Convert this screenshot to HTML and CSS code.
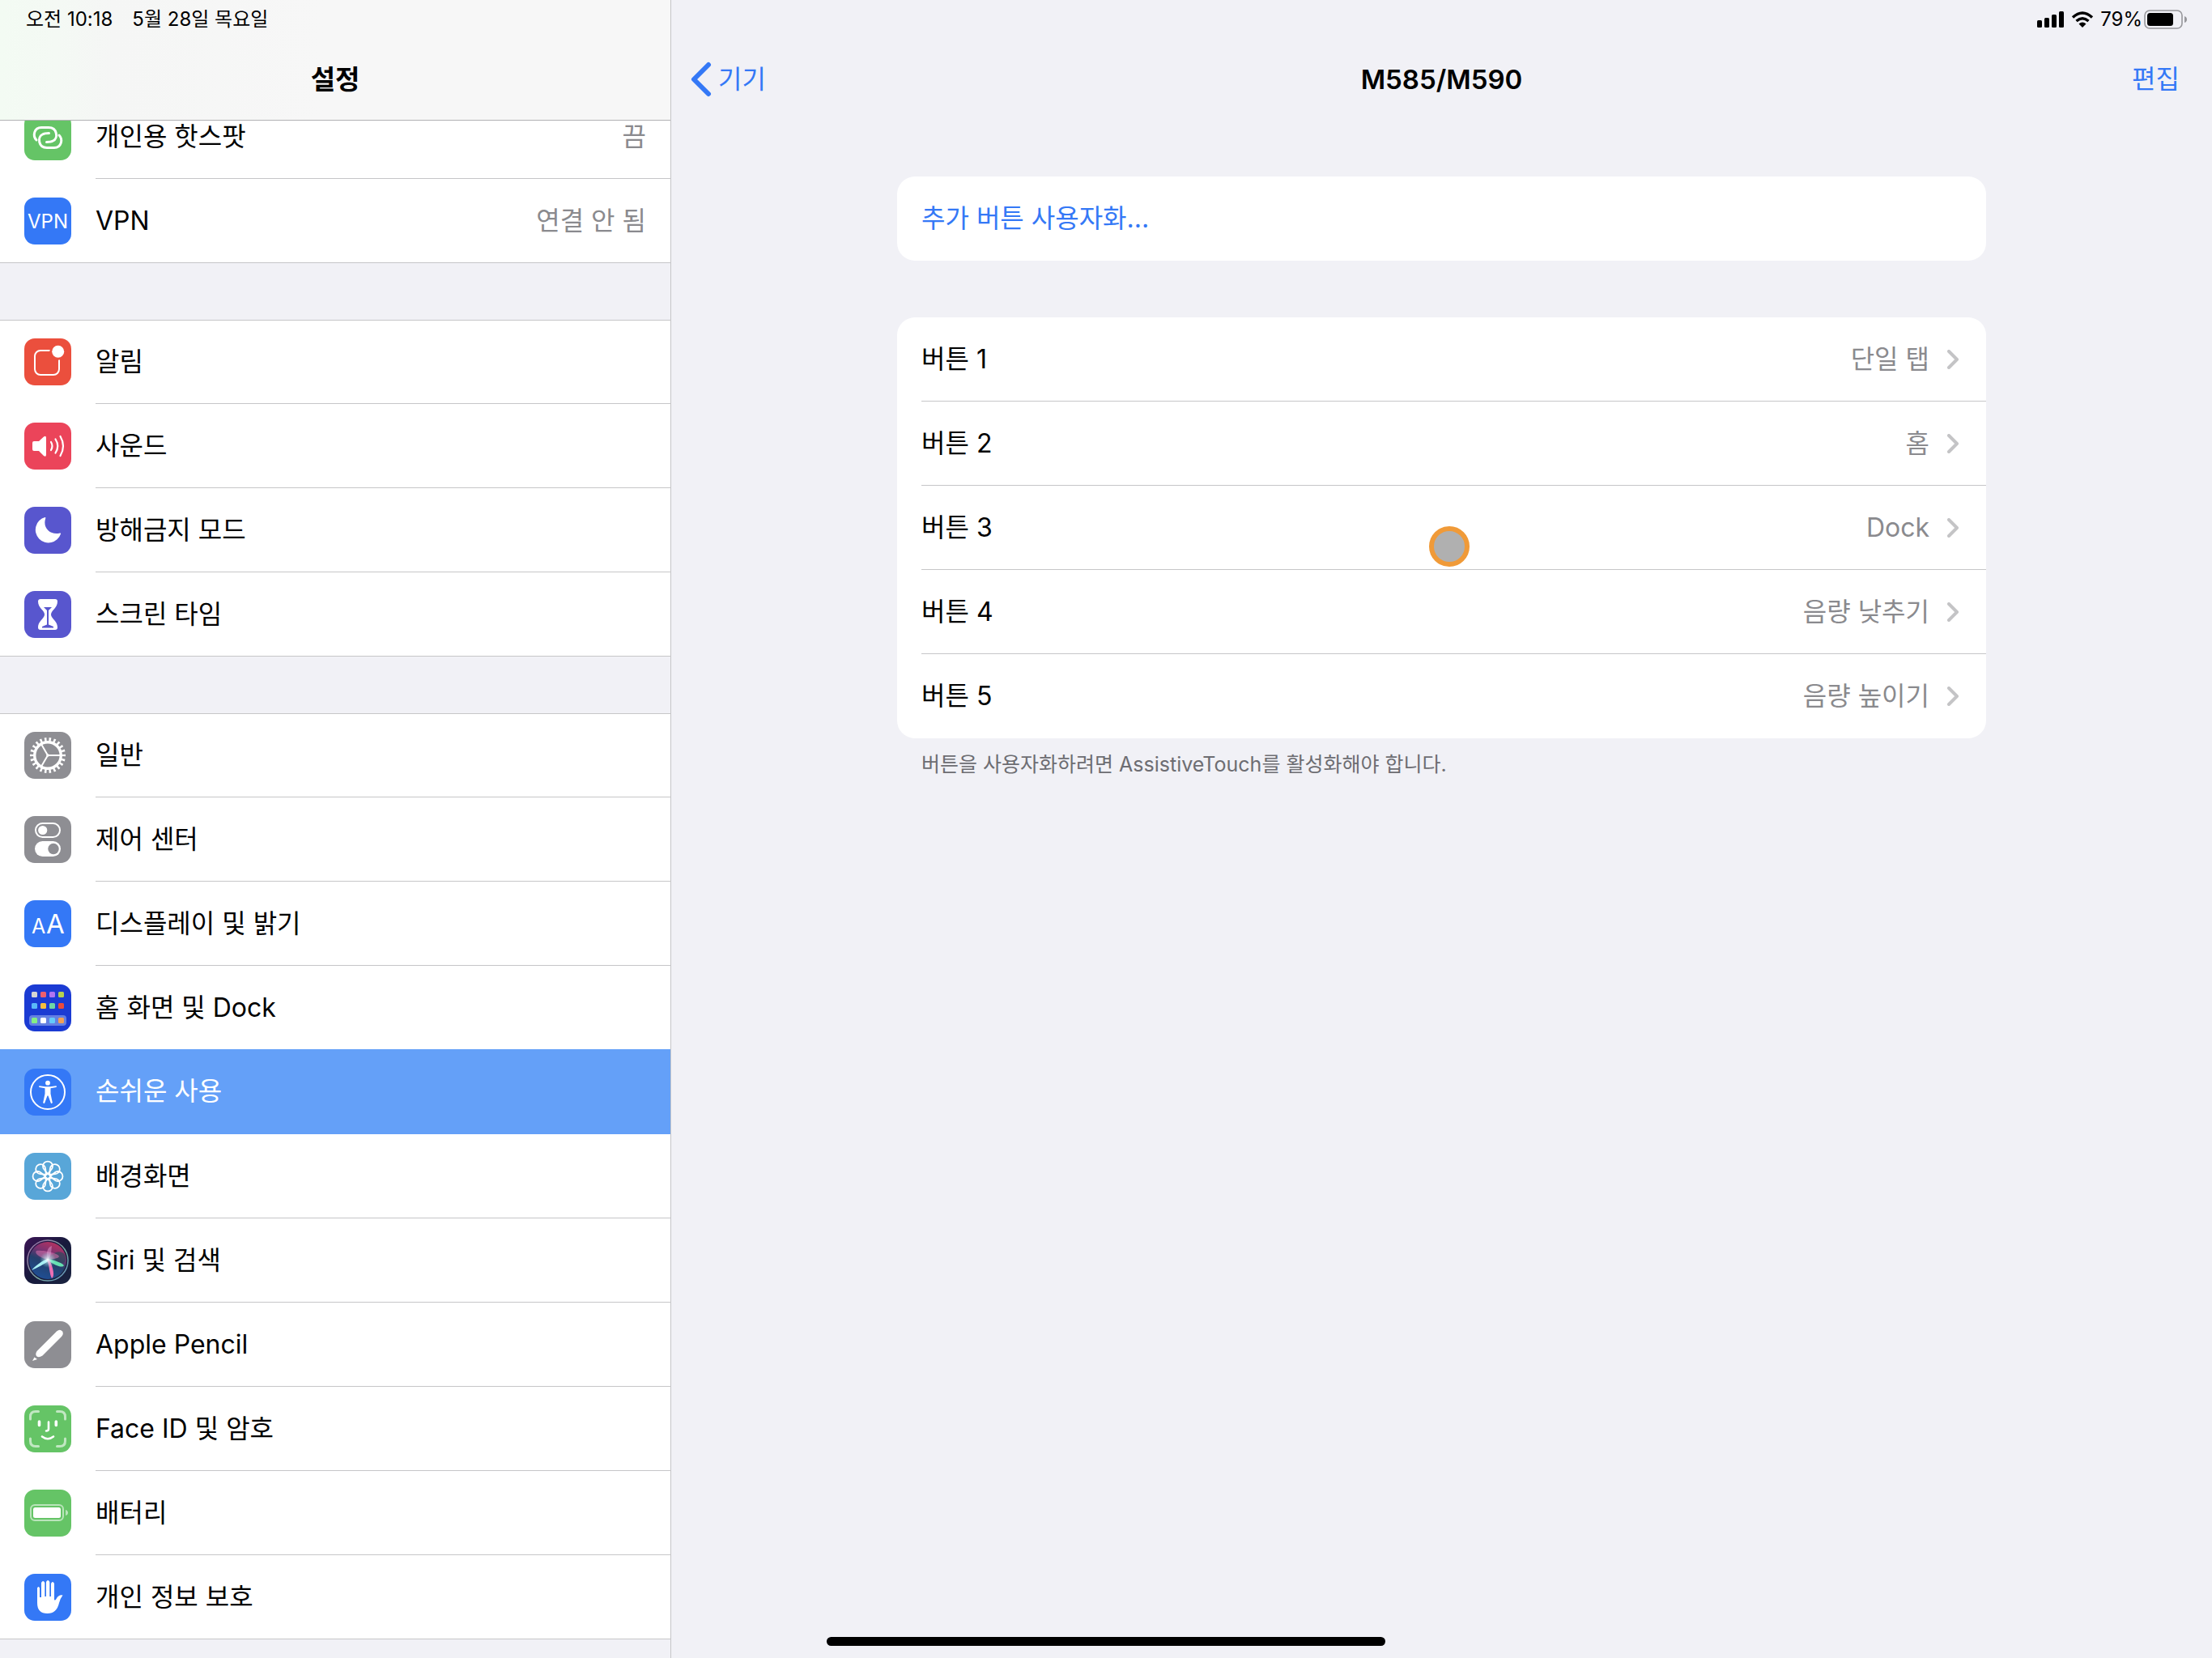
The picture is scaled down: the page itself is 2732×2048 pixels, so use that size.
FILE: index.html
```
<!DOCTYPE html>
<html lang="ko">
<head>
    <meta charset="UTF-8">
    <meta name="viewport" content="width=device-width, initial-scale=1.0">
    <link rel="stylesheet" href="styles.css">
    <title>설정</title>
</head>
<body>
    <aside class="sidebar">
        <header class="sidebar-header">
            <div class="status">
                <span>오전 10:18</span>
                <span>5월 28일 목요일</span>
            </div>
            <div class="navbar">
                <h1 class="title">설정</h1>
            </div>
        </header>

        <nav class="menu">
            <div class="group">
                <a class="item" href="#hotspot">
                    <svg class="icon green" viewBox="0 0 58 58" fill="none" stroke="#fff" stroke-width="3" stroke-linecap="round">
                        <path d="M15 33C10 28 12 17.500 21 17.500H30C41 17.500 42 31 35.500 34C33 35.500 31 35.500 27.500 35.500"/>
                        <path d="M43 27C48 32 46 42.500 37 42.500H28C17 42.500 16 29 22.500 26C25 24.500 27 24.500 30.500 24.500"/>
                    </svg>
                    <span class="row"><span>개인용 핫스팟</span><span class="value">끔</span></span>
                </a>
                <a class="item" href="#vpn">
                    <svg class="icon blue" viewBox="0 0 58 58">
                        <text class="icon-text" x="29" y="38" font-size="24" text-anchor="middle">VPN</text>
                    </svg>
                    <span class="row"><span>VPN</span><span class="value">연결 안 됨</span></span>
                </a>
            </div>

            <div class="group">
                <a class="item" href="#notifications">
                    <svg class="icon orange" viewBox="0 0 58 58">
                        <rect x="13" y="15" width="30" height="30" rx="7" fill="none" stroke="#fff" stroke-width="2"/>
                        <circle cx="41.700" cy="16.300" r="10.500" fill="#eb4f3d"/>
                        <circle cx="41.700" cy="16.300" r="7.500" fill="#fff"/>
                    </svg>
                    <span class="row">알림</span>
                </a>
                <a class="item" href="#sounds">
                    <svg class="icon pink" viewBox="0 0 58 58">
                        <path d="M12 23H18L24 17.500Q27 15.500 27 19V39.500Q27 43 24 41L18 35H12Q10 35 10 33V25Q10 23 12 23Z" fill="#fff"/>
                        <path d="M33 24Q36 29 33 34M38.500 20.500Q44 29 38.500 37.500M44.500 17Q51.500 29 44.500 41" fill="none" stroke="#fff" stroke-width="2.200" stroke-linecap="round"/>
                    </svg>
                    <span class="row">사운드</span>
                </a>
                <a class="item" href="#dnd">
                    <svg class="icon purple" viewBox="0 0 58 58">
                        <path d="M25.500 13A16 16 0 1 0 45 33.500Q45.500 32 44 32.500C33 35.500 22 27 26.300 14Q26.500 12.500 25.500 13Z" fill="#fff"/>
                    </svg>
                    <span class="row">방해금지 모드</span>
                </a>
                <a class="item" href="#screen-time">
                    <svg class="icon purple" viewBox="0 0 58 58">
                        <path d="M20 10H38Q41 10 41 13C41 21 33 24 33 29C33 34 41 37 41 45Q41 48 38 48H20Q17 48 17 45C17 37 25 34 25 29C25 24 17 21 17 13Q17 10 20 10Z" fill="#fff"/>
                        <path d="M24 20H34L30 24V41.500L36 44V45.500H22V44L28 41.500V24Z" fill="#5856ce"/>
                    </svg>
                    <span class="row">스크린 타임</span>
                </a>
            </div>

            <div class="group">
                <a class="item" href="#general">
                    <svg class="icon gray" viewBox="0 0 58 58" fill="none" stroke="#fff">
                        <circle cx="29" cy="29" r="19.500" stroke-width="5" pathLength="88" stroke-dasharray="1.800 2.200" stroke-dashoffset="0.900"/>
                        <circle cx="29" cy="29" r="16.300" stroke-width="3.400"/>
                        <path d="M29 29H45M29 29L21 15.200M29 29L21 42.800" stroke-width="2"/>
                        <circle cx="29" cy="29" r="1" stroke-width="1.500"/>
                    </svg>
                    <span class="row">일반</span>
                </a>
                <a class="item" href="#control-center">
                    <svg class="icon gray" viewBox="0 0 58 58">
                        <rect x="14" y="9" width="30" height="17" rx="8.500" fill="none" stroke="#fff" stroke-width="2"/>
                        <circle cx="22.700" cy="17.500" r="5.600" fill="#fff"/>
                        <rect x="13" y="31" width="32" height="19" rx="9.500" fill="#fff"/>
                        <circle cx="36" cy="40.500" r="6.700" fill="#8e8e93"/>
                    </svg>
                    <span class="row">제어 센터</span>
                </a>
                <a class="item" href="#display">
                    <svg class="icon blue" viewBox="0 0 58 58">
                        <text class="icon-text" x="9" y="41" font-size="25">A</text>
                        <text class="icon-text" x="27" y="41" font-size="33">A</text>
                    </svg>
                    <span class="row">디스플레이 및 밝기</span>
                </a>
                <a class="item" href="#home-screen">
                    <svg class="icon navy" viewBox="0 0 58 58">
                        <rect x="6" y="38" width="46" height="13" rx="4" fill="#6480e2"/>
                        <rect x="9" y="9" width="7" height="7" rx="1.500" fill="#d5d5d3"/>
                        <rect x="20" y="9" width="7" height="7" rx="1.500" fill="#ed5f6d"/>
                        <rect x="31" y="9" width="7" height="7" rx="1.500" fill="#b074f2"/>
                        <rect x="42" y="9" width="7" height="7" rx="1.500" fill="#b5d24f"/>
                        <rect x="9" y="23" width="7" height="7" rx="1.500" fill="#5ab9f8"/>
                        <rect x="20" y="23" width="7" height="7" rx="1.500" fill="#f6be3f"/>
                        <rect x="31" y="23" width="7" height="7" rx="1.500" fill="#6fd6a5"/>
                        <rect x="42" y="23" width="7" height="7" rx="1.500" fill="#eb4b3b"/>
                        <rect x="9" y="41" width="7" height="7" rx="1.500" fill="#85ee83"/>
                        <rect x="20" y="41" width="7" height="7" rx="1.500" fill="#fff"/>
                        <rect x="31" y="41" width="7" height="7" rx="1.500" fill="#63cbfa"/>
                        <rect x="42" y="41" width="7" height="7" rx="1.500" fill="#f2a054"/>
                    </svg>
                    <span class="row">홈 화면 및 Dock</span>
                </a>
                <a class="item selected" href="#accessibility" aria-current="page">
                    <svg class="icon blue" viewBox="0 0 58 58">
                        <circle cx="29" cy="29" r="21" fill="none" stroke="#fff" stroke-width="2"/>
                        <circle cx="29" cy="17.700" r="2.900" fill="#fff"/>
                        <path d="M18.500 21.200L26 22.300H32L39.500 21.200Q40.500 22.500 39.500 23L32.500 24.300V31L34.800 42Q34 43.800 32.800 42.500L29.500 33.500H28.500L25.200 42.500Q24 43.800 23.200 42L25.500 31V24.300L18.500 23Q17.500 22.500 18.500 21.200Z" fill="#fff"/>
                    </svg>
                    <span class="row">손쉬운 사용</span>
                </a>
                <a class="item" href="#wallpaper">
                    <svg class="icon sky" viewBox="0 0 58 58">
                        <g transform="translate(29 29)" fill="none" stroke="#fff" stroke-width="1.800">
                            <circle r="3"/>
                            <path id="petal" d="M0 -3L-4.500 -8.500A6 6 0 1 1 4.500 -8.500Z"/>
                            <use href="#petal" transform="rotate(45)"/>
                            <use href="#petal" transform="rotate(90)"/>
                            <use href="#petal" transform="rotate(135)"/>
                            <use href="#petal" transform="rotate(180)"/>
                            <use href="#petal" transform="rotate(225)"/>
                            <use href="#petal" transform="rotate(270)"/>
                            <use href="#petal" transform="rotate(315)"/>
                        </g>
                    </svg>
                    <span class="row">배경화면</span>
                </a>
                <a class="item" href="#siri">
                    <svg class="icon" viewBox="0 0 58 58">
                        <defs>
                            <linearGradient id="siri-back" x1="0" y1="0" x2="1" y2="1">
                                <stop offset="0" stop-color="#3b1455"/>
                                <stop offset="0.500" stop-color="#171a3c"/>
                                <stop offset="1" stop-color="#1a2440"/>
                            </linearGradient>
                            <linearGradient id="siri-orb" x1="0.700" y1="0" x2="0.300" y2="1">
                                <stop offset="0" stop-color="#b8325e"/>
                                <stop offset="0.300" stop-color="#7c3272"/>
                                <stop offset="0.550" stop-color="#24406c"/>
                                <stop offset="1" stop-color="#1f4f96"/>
                            </linearGradient>
                            <linearGradient id="siri-ring" x1="0" y1="0" x2="1" y2="1">
                                <stop offset="0" stop-color="#a06aa8"/>
                                <stop offset="0.600" stop-color="#79a9a0"/>
                                <stop offset="1" stop-color="#5f8fc0"/>
                            </linearGradient>
                            <radialGradient id="siri-glow">
                                <stop offset="0" stop-color="#fff"/>
                                <stop offset="0.300" stop-color="#d8fbff" stop-opacity="0.600"/>
                                <stop offset="1" stop-color="#7fe0e8" stop-opacity="0"/>
                            </radialGradient>
                        </defs>
                        <rect width="58" height="58" fill="url(#siri-back)"/>
                        <circle cx="29" cy="29" r="23" fill="url(#siri-orb)"/>
                        <path d="M29 28C35 18 45 15 50 22C54 32 47 37 29 28Z" fill="#1c4d58" opacity="0.600"/>
                        <path d="M29 28C18 25 12 20 15 17C23 16 42 20 43 24C42 27 35 27 29 28Z" fill="#e878b4" opacity="0.500"/>
                        <path d="M29 28C26 20 29 12 34 11C33 17 34 23 29 28Z" fill="#e59ad0" opacity="0.500"/>
                        <path d="M29 27C22 29 13 36 9 41C16 38 25 33 31 29Z" fill="#a8f0f4"/>
                        <path d="M29 27C38 29 47 32 49 35C47 39 38 35 29 29Z" fill="#66e0b0"/>
                        <path d="M28 28C31 34 31 46 34 51C38 49 36 38 31 28Z" fill="#ec6fb4"/>
                        <circle cx="29" cy="28" r="10" fill="url(#siri-glow)"/>
                        <circle cx="29" cy="29" r="25" fill="none" stroke="url(#siri-ring)" stroke-width="1.500"/>
                    </svg>
                    <span class="row">Siri 및 검색</span>
                </a>
                <a class="item" href="#pencil">
                    <svg class="icon gray" viewBox="0 0 58 58" fill="#fff">
                        <path d="M40 12.500Q44 9 47 12.500Q49 15.500 46 19L22.500 42.500Q18 45.500 15.500 43.500Q13 41 15.500 37Z"/>
                        <path d="M12.500 44.500L16 47L10 49Z"/>
                    </svg>
                    <span class="row">Apple Pencil</span>
                </a>
                <a class="item" href="#face-id">
                    <svg class="icon green" viewBox="0 0 58 58" fill="none" stroke="#fff" stroke-width="3" stroke-linecap="round">
                        <path d="M7.500 17V14Q7.500 7.500 14 7.500H17.500M40.500 7.500H44Q50.500 7.500 50.500 14V17M50.500 41V44Q50.500 50.500 44 50.500H40.500M17.500 50.500H14Q7.500 50.500 7.500 44V41" opacity="0.600"/>
                        <path d="M18.500 20V24.500M39.300 20V24.500" stroke-width="3.600"/>
                        <path d="M30 20.500V29Q30 31.500 27 31.500M22 38.500Q29 44 36 38.500" stroke-width="2.600"/>
                    </svg>
                    <span class="row">Face ID 및 암호</span>
                </a>
                <a class="item" href="#battery">
                    <svg class="icon green" viewBox="0 0 58 58">
                        <rect x="8" y="19" width="40" height="19" rx="5" fill="none" stroke="#fff" stroke-width="2" opacity="0.550"/>
                        <rect x="11" y="22" width="34" height="13" rx="2.500" fill="#fff"/>
                        <path d="M51 25Q54 26 54 28.500Q54 31 51 32Z" fill="#fff" opacity="0.550"/>
                    </svg>
                    <span class="row">배터리</span>
                </a>
                <a class="item" href="#privacy">
                    <svg class="icon blue" viewBox="0 0 58 58" fill="#fff">
                        <path d="M16 17.500Q17.500 14.500 19 17.500V29H21V11Q23.200 7 25.300 11V28H27V10Q29.200 6 31.300 10V28H33V12Q35 8 37 12V32Q38 33.500 39.500 31Q42.500 25.500 47.500 26.500Q44 31 43 36Q40 49 28.500 49Q16 49 16 36Z"/>
                    </svg>
                    <span class="row">개인 정보 보호</span>
                </a>
            </div>
        </nav>
    </aside>

    <main class="detail">
        <header class="detail-header">
            <div class="status status-right">
                <svg class="signal" viewBox="0 0 34 20" aria-label="신호">
                    <rect x="0" y="11" width="6" height="9" rx="1.500"/>
                    <rect x="9" y="8" width="6" height="12" rx="1.500"/>
                    <rect x="18" y="4" width="6" height="16" rx="1.500"/>
                    <rect x="27" y="0" width="6" height="20" rx="1.500"/>
                </svg>
                <svg class="wifi" viewBox="0 0 28 20" aria-label="Wi-Fi">
                    <path d="M2 7.500Q14 -3.500 26 7.500M6.500 12Q14 5.500 21.500 12" fill="none" stroke="#000" stroke-width="3.400"/>
                    <path d="M9.500 15.500Q14 11.500 18.500 15.500L14 20Z"/>
                </svg>
                <div class="charge">
                    <span>79%</span>
                    <svg class="battery" viewBox="0 0 54 24" aria-label="배터리">
                        <rect x="1" y="1" width="46" height="22" rx="6" fill="none" stroke="#97979b" stroke-width="1.600"/>
                        <rect x="4" y="4" width="32" height="16" rx="3.500"/>
                        <path d="M50 8Q53 9 53 12Q53 15 50 16Z" fill="#97979b"/>
                    </svg>
                </div>
            </div>
            <div class="navbar navbar-detail">
                <a class="back" href="#devices">
                    <svg class="back-arrow" viewBox="0 0 26 44">
                        <path d="M22 4L4 22L22 40" fill="none" stroke="#3478f6" stroke-width="6" stroke-linecap="round" stroke-linejoin="round"/>
                    </svg>
                    기기
                </a>
                <h2 class="title">M585/M590</h2>
                <button class="edit" type="button">편집</button>
            </div>
        </header>

        <div class="content">
            <div class="card">
                <button class="card-row link" type="button">추가 버튼 사용자화...</button>
            </div>

            <div class="card">
                <button class="card-row" type="button">
                    <span>버튼 1</span>
                    <span class="value">단일 탭</span>
                    <svg class="chevron" viewBox="0 0 14 24"><path d="M2 2L12 12L2 22"/></svg>
                </button>
                <button class="card-row" type="button">
                    <span>버튼 2</span>
                    <span class="value">홈</span>
                    <svg class="chevron" viewBox="0 0 14 24"><path d="M2 2L12 12L2 22"/></svg>
                </button>
                <button class="card-row" type="button">
                    <span>버튼 3</span>
                    <span class="value">Dock</span>
                    <svg class="chevron" viewBox="0 0 14 24"><path d="M2 2L12 12L2 22"/></svg>
                </button>
                <button class="card-row" type="button">
                    <span>버튼 4</span>
                    <span class="value">음량 낮추기</span>
                    <svg class="chevron" viewBox="0 0 14 24"><path d="M2 2L12 12L2 22"/></svg>
                </button>
                <button class="card-row" type="button">
                    <span>버튼 5</span>
                    <span class="value">음량 높이기</span>
                    <svg class="chevron" viewBox="0 0 14 24"><path d="M2 2L12 12L2 22"/></svg>
                </button>
            </div>
            <p class="note">버튼을 사용자화하려면 AssistiveTouch를 활성화해야 합니다.</p>
        </div>
    </main>

    <div class="pointer"></div>
    <div class="home-bar"></div>
</body>
</html>
```
FILE: styles.css
```
* {
    box-sizing: border-box;
}
body {
    display: flex;
    position: relative;
    height: 100vh;
    margin: 0;
    overflow: hidden;
    background-color: #f1f1f6;
    font-family: Inter, "Noto Sans CJK KR", sans-serif;
    font-size: 32px;
    line-height: 40px;
    color: #000000;
}
a {
    color: inherit;
    text-decoration: none;
}
button {
    padding: 0;
    border: 0;
    background: none;
    font: inherit;
    color: inherit;
    text-align: left;
    cursor: pointer;
}

/* status bar and navigation bar */
.status {
    display: flex;
    align-items: center;
    gap: 24px;
    height: 48px;
    padding: 0 30px 0 32px;
    font-size: 24px;
    line-height: 32px;
}
.status-right {
    justify-content: flex-end;
    gap: 8px;
}
.charge {
    display: flex;
    align-items: center;
    gap: 2px;
}
.navbar {
    display: flex;
    align-items: center;
    justify-content: center;
    height: 100px;
}
.navbar-detail {
    display: grid;
    grid-template-columns: 1fr auto 1fr;
    padding: 0 24px;
}
.title {
    margin: 0;
    font-size: 33px;
    font-weight: 600;
}
.signal {
    width: 34px;
    height: 20px;
}
.wifi {
    width: 28px;
    height: 20px;
}
.battery {
    width: 54px;
    height: 24px;
}
.back {
    display: flex;
    align-items: center;
    gap: 8px;
    justify-self: start;
    color: #3478f6;
}
.back-arrow {
    width: 26px;
    height: 44px;
}
.edit {
    justify-self: end;
    padding-right: 16px;
    color: #3478f6;
}

/* left menu */
.sidebar {
    flex: 0 0 829px;
    overflow: hidden;
    border-right: 1px solid #c6c6c8;
}
.sidebar-header {
    position: relative;
    z-index: 1;
    border-bottom: 1px solid #b2b2b4;
    background: linear-gradient(to right, #f3fbf3, #f4f9f4 70px, #f5f6f5 140px, #f7f7f7 400px);
}
/* the list is scrolled a little under the header */
.menu {
    display: flex;
    flex-direction: column;
    gap: 70px;
    margin-top: -32px;
}
.group {
    border-bottom: 1px solid #c6c6c8;
    background-color: #ffffff;
}
.group + .group {
    box-shadow: inset 0 1px #c6c6c8;
}
.item {
    display: flex;
    align-items: center;
    gap: 30px;
    height: 104px;
    padding-left: 30px;
}
.item:last-child {
    height: 103px;
}
.icon {
    flex: none;
    width: 58px;
    height: 58px;
    border-radius: 13px;
}
.icon-text {
    font-family: Inter, sans-serif;
    fill: #ffffff;
}
.row {
    display: flex;
    flex: 1;
    align-items: center;
    justify-content: space-between;
    height: 100%;
    padding-right: 30px;
    border-bottom: 1px solid #c6c6c8;
}
.item:last-child .row {
    border-bottom: 0;
}
.value {
    color: #8a8a8e;
}
.selected {
    position: relative;
    height: 105px;
    margin-top: -1px;
    background-color: #64a0f8;
    color: #ffffff;
}
.selected .row {
    border-color: transparent;
}
.green {
    background-color: #65c466;
}
.blue {
    background-color: #3478f6;
}
.orange {
    background-color: #eb4f3d;
}
.pink {
    background-color: #eb445a;
}
.purple {
    background-color: #5856ce;
}
.gray {
    background-color: #8e8e93;
}
.navy {
    background-color: #1b3bd3;
}
.sky {
    background-color: #58a6d8;
}

/* right side */
.detail {
    flex: 1;
    min-width: 0;
}
.content {
    display: flex;
    flex-direction: column;
    gap: 70px;
    max-width: 1345px;
    margin: 70px auto 0;
}
.card {
    overflow: hidden;
    border-radius: 22px;
    background-color: #ffffff;
}
.card-row {
    display: flex;
    align-items: center;
    width: 100%;
    height: 104px;
    padding: 0 34px 0 30px;
    background: linear-gradient(#c6c6c8, #c6c6c8) 30px 100% / 100% 1px no-repeat;
}
.card-row:last-child {
    background: none;
}
.card-row .value {
    margin-left: auto;
}
.link {
    color: #3478f6;
}
.chevron {
    width: 14px;
    height: 24px;
    margin-left: 22px;
    fill: none;
    stroke: #c4c4c6;
    stroke-width: 4;
    stroke-linecap: round;
    stroke-linejoin: round;
}
.note {
    margin: -54px 30px 0;
    font-size: 25px;
    line-height: 32px;
    color: #6d6d72;
}

.pointer {
    position: absolute;
    top: 650px;
    left: 1765px;
    width: 50px;
    height: 50px;
    border: 6px solid #f09a38;
    border-radius: 50%;
    background-color: #b0b0b0;
}
.home-bar {
    position: absolute;
    bottom: 15px;
    left: 50%;
    width: 690px;
    height: 11px;
    margin-left: -345px;
    border-radius: 6px;
    background-color: #000000;
}
```
